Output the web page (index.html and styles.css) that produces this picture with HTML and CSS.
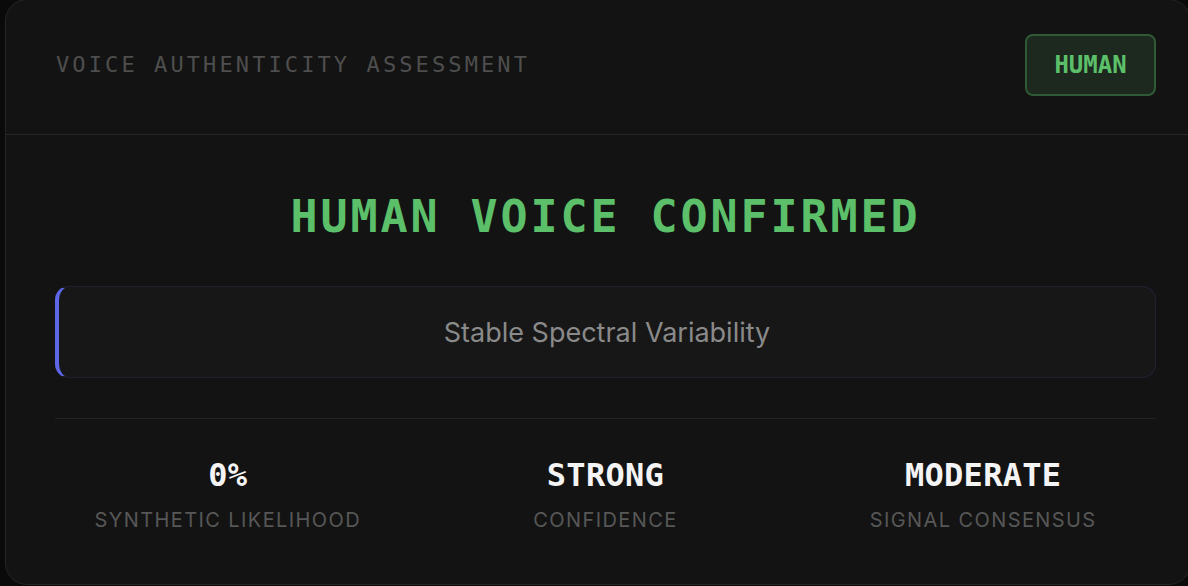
FILE: index.html
```html
<!DOCTYPE html>
<html lang="en">
<head>
<meta charset="utf-8">
<title>Voice Authenticity Assessment</title>
<link rel="stylesheet" href="styles.css">
</head>
<body>
<div class="card">
  <header class="card-header">
    <h2 class="card-title">VOICE AUTHENTICITY ASSESSMENT</h2>
    <span class="badge">HUMAN</span>
  </header>
  <section class="card-body">
    <h1 class="verdict">HUMAN VOICE CONFIRMED</h1>
    <div class="reason">Stable Spectral Variability</div>
    <div class="stats">
      <div class="stat">
        <div class="stat-value">0%</div>
        <div class="stat-label">SYNTHETIC LIKELIHOOD</div>
      </div>
      <div class="stat">
        <div class="stat-value">STRONG</div>
        <div class="stat-label">CONFIDENCE</div>
      </div>
      <div class="stat">
        <div class="stat-value">MODERATE</div>
        <div class="stat-label">SIGNAL CONSENSUS</div>
      </div>
    </div>
  </section>
</div>
</body>
</html>
```
FILE: styles.css
```css
html, body {
  margin: 0;
  padding: 0;
  background: #0a0a0a;
  overflow: hidden;
}

.card {
  box-sizing: border-box;
  margin-left: 5px;
  margin-top: -1px;
  width: 1186px;
  height: 586px;
  background: #131313;
  border: 1px solid #252525;
  border-radius: 22px;
  overflow: hidden;
}

.card-header {
  box-sizing: border-box;
  height: 135px;
  display: flex;
  align-items: center;
  justify-content: space-between;
  padding: 0 34px 4px 50px;
  border-bottom: 1px solid #262626;
}

.card-title {
  margin: 0;
  font-family: "DejaVu Sans Mono", monospace;
  font-weight: normal;
  font-size: 22px;
  line-height: 28px;
  letter-spacing: 3.1px;
  color: #4e4e4e;
}

.badge {
  box-sizing: border-box;
  width: 131px;
  height: 62px;
  display: flex;
  align-items: center;
  justify-content: center;
  background: #1d281e;
  border: 2px solid #2f5a35;
  border-radius: 8px;
  font-family: "DejaVu Sans Mono", monospace;
  font-weight: bold;
  font-size: 24px;
  color: #5cc06a;
}

.card-body {
  padding: 0 34px 0 49px;
}

.verdict {
  margin: 54px 0 41px;
  text-align: center;
  font-family: "DejaVu Sans Mono", monospace;
  font-weight: bold;
  font-size: 45px;
  line-height: 56px;
  letter-spacing: 2.9px;
  color: #5cbf69;
}

.reason {
  box-sizing: border-box;
  height: 92px;
  display: flex;
  align-items: center;
  justify-content: center;
  background: #171717;
  border: 1px solid rgba(99, 102, 241, 0.12);
  border-left: 4px solid #5d66e8;
  border-radius: 14px;
  font-family: "Inter", sans-serif;
  font-size: 27px;
  color: #8a8a8a;
}

.stats {
  margin-top: 40px;
  border-top: 1px solid #222;
  padding-top: 36px;
  display: grid;
  grid-template-columns: repeat(3, 1fr);
  column-gap: 32px;
}

.stat {
  display: flex;
  flex-direction: column;
  align-items: center;
}

.stat-value {
  font-family: "DejaVu Sans Mono", monospace;
  font-weight: bold;
  font-size: 32px;
  line-height: 40px;
  letter-spacing: 0.3px;
  color: #f4f4f4;
}

.stat-label {
  margin-top: 13px;
  font-family: "Inter", sans-serif;
  font-size: 20px;
  line-height: 24px;
  letter-spacing: 1.4px;
  color: #575757;
}
```
